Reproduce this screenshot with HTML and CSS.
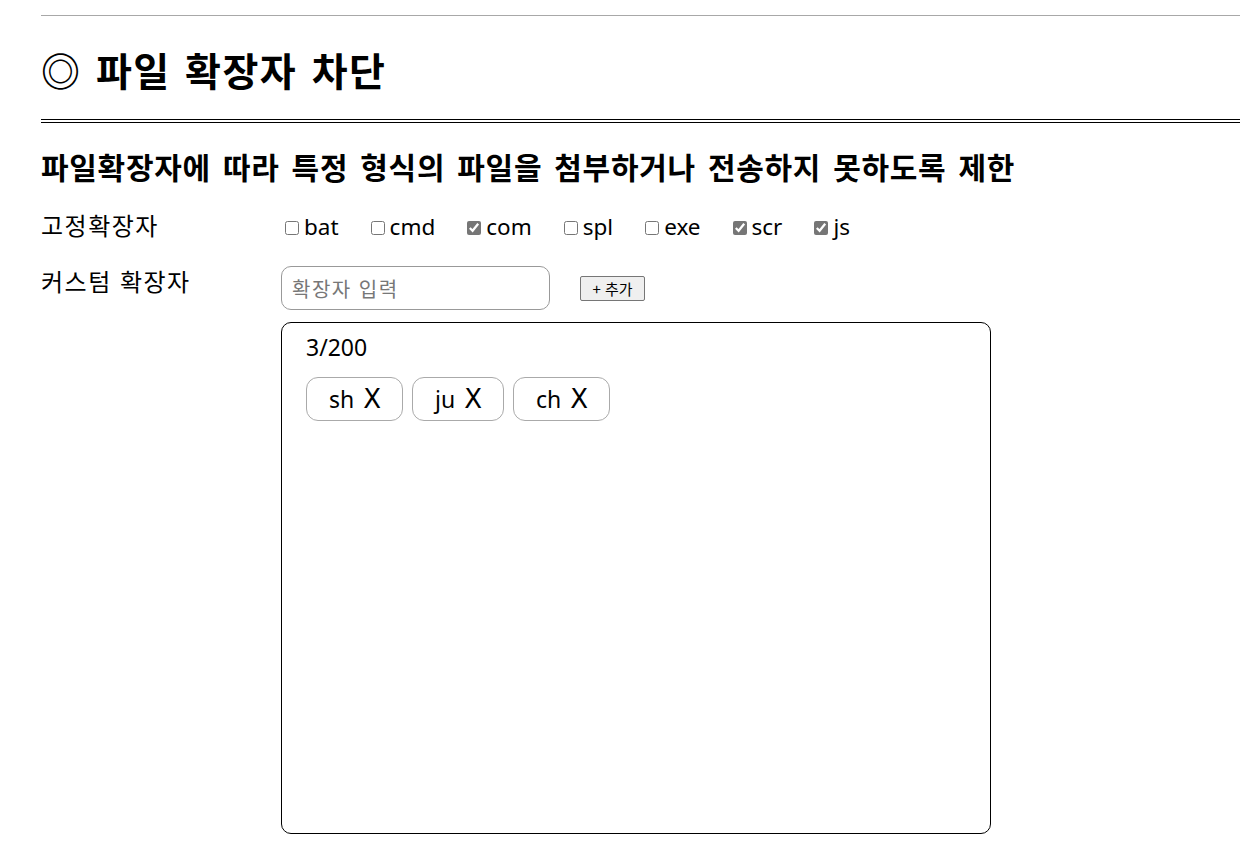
FILE: index.html
```html
<!DOCTYPE html>
<html lang="ko">
<head>
<meta charset="utf-8">
<title>파일 확장자 차단</title>
<link rel="stylesheet" href="styles.css">
</head>
<body>
<div class="page">
  <div class="top-rule"></div>
  <h1 class="title">◎ 파일 확장자 차단</h1>
  <div class="double-rule"></div>
  <h2 class="subtitle">파일확장자에 따라 특정 형식의 파일을 첨부하거나 전송하지 못하도록 제한</h2>

  <div class="form">
    <div class="label">고정확장자</div>
    <div class="fixed">
      <label class="ext"><input type="checkbox">bat</label>
      <label class="ext"><input type="checkbox">cmd</label>
      <label class="ext"><input type="checkbox" checked>com</label>
      <label class="ext"><input type="checkbox">spl</label>
      <label class="ext"><input type="checkbox">exe</label>
      <label class="ext"><input type="checkbox" checked>scr</label>
      <label class="ext"><input type="checkbox" checked>js</label>
    </div>

    <div class="label label-custom">커스텀 확장자</div>
    <div class="custom">
      <div class="add-row">
        <input class="ext-input" type="text" placeholder="확장자 입력">
        <button class="add-btn" type="button">+ 추가</button>
      </div>
      <div class="box">
        <div class="count">3/200</div>
        <div class="tags">
          <span class="tag"><span>sh</span><span class="x">X</span></span>
          <span class="tag"><span>ju</span><span class="x">X</span></span>
          <span class="tag"><span>ch</span><span class="x">X</span></span>
        </div>
      </div>
    </div>
  </div>
</div>
</body>
</html>
```

FILE: styles.css
```css
html, body {
  margin: 0;
  padding: 0;
  background: #fff;
}
body {
  font-family: "Noto Sans", "Noto Sans CJK KR", sans-serif;
  color: #000;
}
.page {
  margin-left: 41px;
  width: 1199px;
  padding-top: 15px;
}
.top-rule {
  border-top: 1px solid #a8a8a8;
}
.title {
  margin: 30px 0 0 0;
  font-family: "Noto Sans CJK KR", sans-serif;
  font-size: 39px;
  line-height: 47px;
  font-weight: 700;
  letter-spacing: 1.5px;
  word-spacing: 2px;
}
.double-rule {
  margin-top: 26px;
  height: 2px;
  border-top: 1px solid #000;
  border-bottom: 1px solid #000;
}
.subtitle {
  margin: 26px 0 0 0;
  font-family: "Noto Sans CJK KR", sans-serif;
  font-size: 30px;
  line-height: 35px;
  font-weight: 700;
  letter-spacing: 0.7px;
  word-spacing: 3px;
}
.form {
  margin-top: 26px;
  display: grid;
  grid-template-columns: 240px 1fr;
  row-gap: 24px;
  font-size: 23px;
}
.label {
  font-family: "Noto Sans CJK KR", sans-serif;
  font-size: 24px;
  line-height: 30px;
  letter-spacing: 1.5px;
}
.fixed {
  display: flex;
  align-items: center;
  gap: 28px;
  line-height: 30px;
  font-size: 22.5px;
  padding-top: 2px;
}
.ext {
  display: flex;
  align-items: center;
}
.ext input {
  margin: 1px 5px 0 4px;
  width: 14px;
  height: 14px;
  accent-color: #767676;
}
.custom {
  display: flex;
  flex-direction: column;
  gap: 12px;
}
.add-row {
  display: flex;
  align-items: center;
  gap: 30px;
}
.ext-input {
  box-sizing: border-box;
  width: 269px;
  height: 44px;
  margin: 0;
  border: 1px solid #999;
  border-radius: 10px;
  padding: 0 10px;
  font-family: "Noto Sans CJK KR", sans-serif;
  font-size: 20px;
  letter-spacing: 1.5px;
  outline: none;
}
.ext-input::placeholder {
  color: #777;
}
.add-btn {
  box-sizing: border-box;
  height: 25px;
  width: 65px;
  margin-top: 0;
  padding: 0;
  font-family: "Noto Sans CJK KR", sans-serif;
  font-size: 15px;
  background: #efefef;
  border: 1px solid #767676;
  border-radius: 2px;
  color: #000;
}
.box {
  box-sizing: border-box;
  width: 710px;
  height: 512px;
  border: 1px solid #000;
  border-radius: 10px;
  padding: 10px 24px;
}
.count {
  line-height: 28px;
}
.tags {
  margin-top: 16px;
  display: flex;
  gap: 9px;
}
.tag {
  box-sizing: border-box;
  height: 44px;
  display: flex;
  align-items: center;
  padding: 0 21px 0 22px;
  border: 1px solid #aaa;
  border-radius: 12px;
  line-height: 1;
}
.x {
  margin-left: 9px;
  font-family: "DejaVu Sans", sans-serif;
  font-size: 26px;
}
```
